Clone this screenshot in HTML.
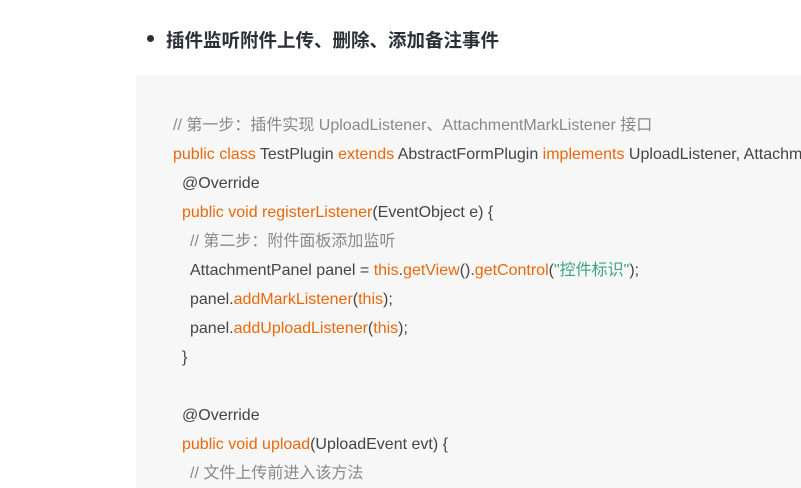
<!DOCTYPE html>
<html><head><meta charset="utf-8"><style>
body{margin:0;width:801px;height:488px;overflow:hidden;background:#fff;font-family:"Liberation Sans","Noto Sans CJK SC",sans-serif;position:relative}
.h{position:absolute;left:166px;top:27px;font-size:18.5px;font-weight:bold;color:#2b2f36;white-space:nowrap}
.dot{position:absolute;left:147px;top:35px;width:7px;height:7px;border-radius:50%;background:#2b2f36}
.code{position:absolute;left:136px;top:75px;width:665px;height:413px;background:#f7f7f7;overflow:hidden}
.l{position:absolute;white-space:nowrap;font-size:16px;color:#444;line-height:20px}
.k{color:#e8680c}.c{color:#888}.s{color:#3aa57b}
</style></head><body>
<div class="dot"></div>
<div class="h">插件监听附件上传、删除、添加备注事件</div>
<div class="code">
<div class="l c" style="left:37px;top:41px">// 第一步：插件实现 UploadListener、AttachmentMarkListener 接口</div>
<div class="l" style="left:37px;top:70px"><span class="k">public class</span> TestPlugin <span class="k">extends</span> AbstractFormPlugin <span class="k">implements</span> UploadListener, AttachmentMarkListener {</div>
<div class="l" style="left:46px;top:99px">@Override</div>
<div class="l" style="left:46px;top:128px"><span class="k">public void registerListener</span>(EventObject e) {</div>
<div class="l c" style="left:54px;top:157px">// 第二步：附件面板添加监听</div>
<div class="l" style="left:54px;top:186px">AttachmentPanel panel = <span class="k">this</span>.<span class="k">getView</span>().<span class="k">getControl</span>(<span class="s">"控件标识"</span>);</div>
<div class="l" style="left:54px;top:215px">panel.<span class="k">addMarkListener</span>(<span class="k">this</span>);</div>
<div class="l" style="left:54px;top:244px">panel.<span class="k">addUploadListener</span>(<span class="k">this</span>);</div>
<div class="l" style="left:46px;top:273px">}</div>
<div class="l" style="left:46px;top:331px">@Override</div>
<div class="l" style="left:46px;top:360px"><span class="k">public void upload</span>(UploadEvent evt) {</div>
<div class="l c" style="left:54px;top:389px">// 文件上传前进入该方法</div>
</div>
</body></html>
